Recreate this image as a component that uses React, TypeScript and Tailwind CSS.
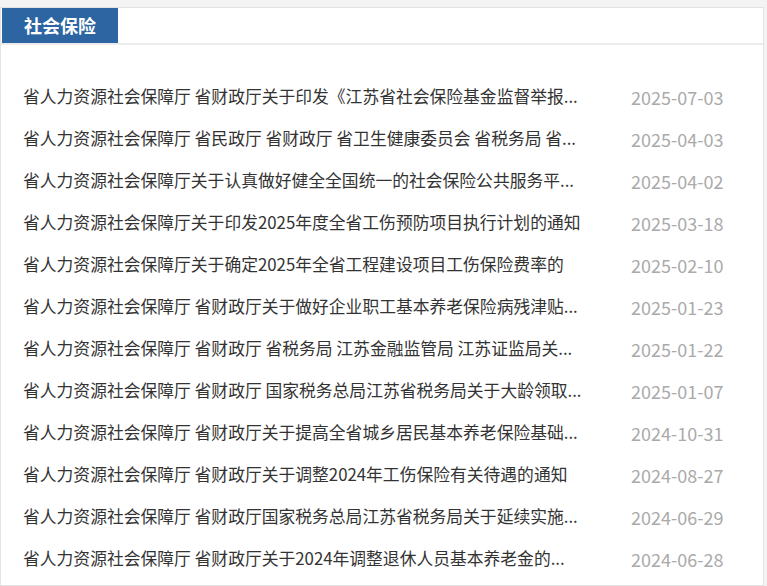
const items = [
  { title: "省人力资源社会保障厅 省财政厅关于印发《江苏省社会保险基金监督举报...", date: "2025-07-03" },
  { title: "省人力资源社会保障厅 省民政厅 省财政厅 省卫生健康委员会 省税务局 省...", date: "2025-04-03" },
  { title: "省人力资源社会保障厅关于认真做好健全全国统一的社会保险公共服务平...", date: "2025-04-02" },
  { title: "省人力资源社会保障厅关于印发2025年度全省工伤预防项目执行计划的通知", date: "2025-03-18" },
  { title: "省人力资源社会保障厅关于确定2025年全省工程建设项目工伤保险费率的", date: "2025-02-10" },
  { title: "省人力资源社会保障厅 省财政厅关于做好企业职工基本养老保险病残津贴...", date: "2025-01-23" },
  { title: "省人力资源社会保障厅 省财政厅 省税务局 江苏金融监管局 江苏证监局关...", date: "2025-01-22" },
  { title: "省人力资源社会保障厅 省财政厅 国家税务总局江苏省税务局关于大龄领取...", date: "2025-01-07" },
  { title: "省人力资源社会保障厅 省财政厅关于提高全省城乡居民基本养老保险基础...", date: "2024-10-31" },
  { title: "省人力资源社会保障厅 省财政厅关于调整2024年工伤保险有关待遇的通知", date: "2024-08-27" },
  { title: "省人力资源社会保障厅 省财政厅国家税务总局江苏省税务局关于延续实施...", date: "2024-06-29" },
  { title: "省人力资源社会保障厅 省财政厅关于2024年调整退休人员基本养老金的...", date: "2024-06-28" },
];

export default function App() {
  return (
    <div
      className="w-[767px] h-[586px] overflow-hidden bg-[#f3f3f3] pt-[7px]"
      style={{ fontFamily: '"Microsoft YaHei", "Noto Sans CJK SC", sans-serif' }}
    >
      <div className="h-full bg-white border border-[#e3e3e3] mr-[3px]">
        <div className="h-[37px] border-b-2 border-[#ebebeb] pl-px">
          <div className="w-[116px] h-[35px] bg-[#2d65a2] text-white text-[18px] font-bold flex items-center justify-center">
            社会保险
          </div>
        </div>
        <ul className="pt-[31px]">
          {items.map((item) => (
            <li key={item.date} className="flex items-center h-[42px] pl-[22px]">
              <span className="w-[608px] shrink-0 overflow-hidden whitespace-nowrap text-[16.8px] text-[#333333]">
                {item.title}
              </span>
              <span className="text-[18px] text-[#aaaaaa]">{item.date}</span>
            </li>
          ))}
        </ul>
      </div>
    </div>
  );
}
